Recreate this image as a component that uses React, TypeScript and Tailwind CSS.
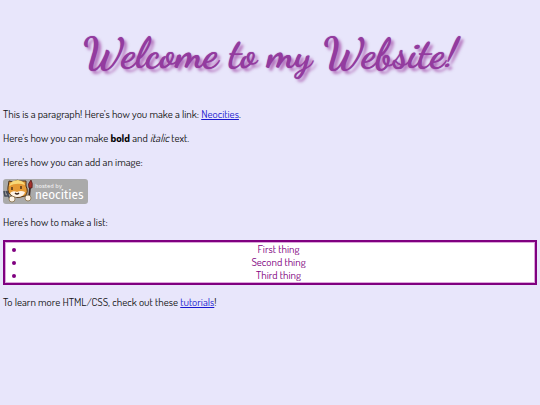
import React from 'react';

const things = ['First thing', 'Second thing', 'Third thing'];

function NeocitiesButton(): JSX.Element {
    return (
        <svg
            width="85"
            height="26"
            viewBox="0 0 85 26"
            role="img"
            aria-label="hosted by neocities"
        >
            <rect x="0" y="0" width="85" height="25" rx="3" fill="#aaaaaa" />
            {/* fork */}
            <path
                d="M1 12 L2 17 L5 17 L5 12 M3 12 L8 22"
                fill="none"
                stroke="#454b58"
                strokeWidth="1.6"
            />
            {/* brush */}
            <path d="M27 9 L26 19" stroke="#3a2a26" strokeWidth="1.8" />
            <path
                d="M28 1 Q30 4 29 9 L26 9 Q24 5 28 1 Z"
                fill="#a5302a"
                stroke="#4a1a18"
                strokeWidth="0.7"
            />
            {/* cat */}
            <path
                d="M5 8 L6 2 L10 3 Q14 0 18 2 L23 2 L23 7 Q26 13 22 17 Q15 20 9 17 Q4 14 5 8 Z"
                fill="#e59a35"
                stroke="#4a3018"
                strokeWidth="1"
                strokeLinejoin="round"
            />
            <path d="M6 7 Q8 1 15 1 Q21 2 22 6 Q14 3 6 7 Z" fill="#f7d878" />
            <path
                d="M7 14 Q10 11 14 13 Q18 11 22 13 Q21 18 14 18 Q9 18 7 14 Z"
                fill="#fdf3e6"
            />
            <path
                d="M9 8 V11 M18 7 V10 M12 14 Q14 16 16 14"
                fill="none"
                stroke="#3a2418"
                strokeWidth="1.3"
            />
            <circle
                cx="9"
                cy="20"
                r="3"
                fill="#fdf3e6"
                stroke="#7a6038"
                strokeWidth="0.7"
            />
            <circle
                cx="25"
                cy="19"
                r="3"
                fill="#fdf3e6"
                stroke="#7a6038"
                strokeWidth="0.7"
            />
            <text
                x="32"
                y="9"
                fill="#f2f2f2"
                fontSize="6"
                fontFamily="'Fira Sans', 'Open Sans', sans-serif"
            >
                hosted by
            </text>
            <text
                x="32"
                y="20"
                fill="#fff"
                fontSize="13"
                fontFamily="'Fira Sans Condensed', 'Fira Sans', 'Open Sans', sans-serif"
            >
                neocities
            </text>
        </svg>
    );
}

export default function App(): JSX.Element {
    return (
        <main className="min-h-screen bg-[#e8e6fb] px-[3px] pt-6 font-['Dosis','Lato',sans-serif] text-[11px] leading-[13px] text-[#111111]">
            <h1 className="mb-6 text-center font-['Dancing_Script','Liberation_Serif',cursive] text-[42px] leading-[60px] font-bold text-[#933b9f] [text-shadow:0_0_1px_#933b9f,3px_3px_3px_#80008080]">
                Welcome to my Website!
            </h1>
            <p className="mb-[11px]">
                This is a paragraph! Here's how you make a link:{' '}
                <a
                    href="https://neocities.org"
                    className="text-[#1a1ad0] underline"
                >
                    Neocities
                </a>
                .
            </p>
            <p className="mb-[11px]">
                Here's how you can make{' '}
                <strong className="text-black">bold</strong> and <em>italic</em>{' '}
                text.
            </p>
            <p className="mb-[10px]">Here's how you can add an image:</p>
            <NeocitiesButton />
            <p className="my-[11px]">Here's how to make a list:</p>
            <ul className="mb-[11px] list-disc border-2 border-[#800080] bg-white py-px pr-1 pl-[21px] text-center text-[#800080] inset-shadow-[0_0_0_1px_#dba6db]">
                {things.map((thing) => (
                    <li key={thing}>{thing}</li>
                ))}
            </ul>
            <p>
                To learn more HTML/CSS, check out these{' '}
                <a
                    href="https://neocities.org/tutorials"
                    className="text-[#1a1ad0] underline"
                >
                    tutorials
                </a>
                !
            </p>
        </main>
    );
}
